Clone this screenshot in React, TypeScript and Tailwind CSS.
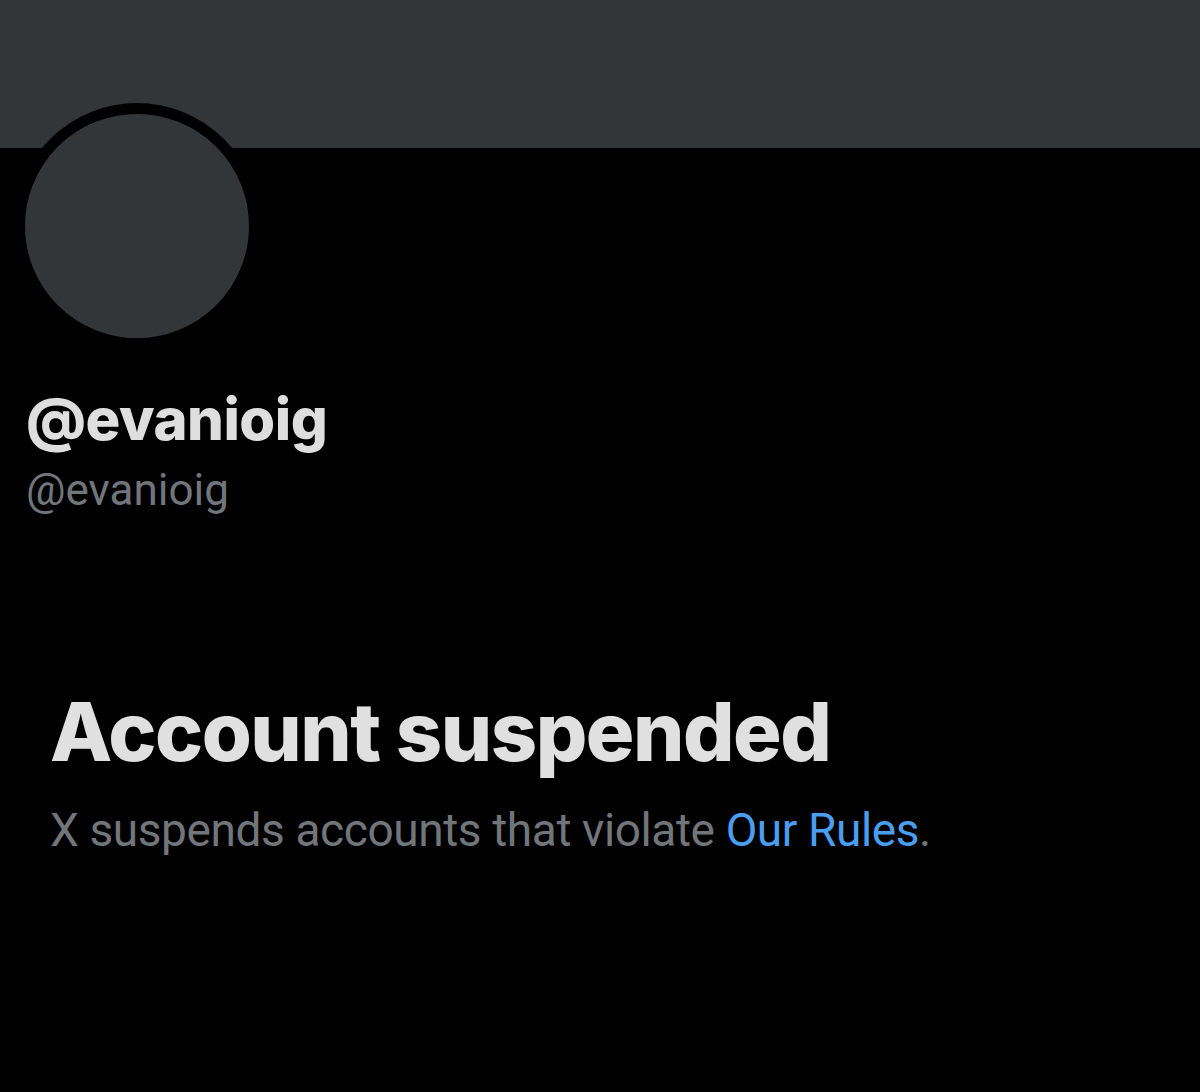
import React from 'react';

export default function App() {
  return (
    <div className="min-h-[1092px] w-[1200px] bg-black">
      <div className="h-[148px] bg-[#333639]" />
      <div className="-mt-[45px] ml-[14px] h-[246px] w-[246px] rounded-full border-[11px] border-black bg-[#333639]" />
      <div className="pl-[26px] pt-[40px]">
        <div className="font-['Inter',sans-serif] text-[58px] font-extrabold leading-[60px] tracking-[-0.5px] text-[#dedede]">
          @evanioig
        </div>
        <div className="mt-[16px] font-['Roboto',sans-serif] text-[44px] leading-[50px] text-[#71767b]">
          @evanioig
        </div>
      </div>
      <div className="pl-[50px] pt-[172px]">
        <h1 className="font-['Inter',sans-serif] text-[81px] font-extrabold leading-[90px] tracking-[-1.5px] text-[#e0e0e0]">
          Account suspended
        </h1>
        <p className="mt-[26px] font-['Roboto',sans-serif] text-[46px] leading-[54px] tracking-[-0.4px] text-[#71767b]">
          X suspends accounts that violate{' '}
          <span className="text-[#4a9ef0]">Our Rules</span>.
        </p>
      </div>
    </div>
  );
}
